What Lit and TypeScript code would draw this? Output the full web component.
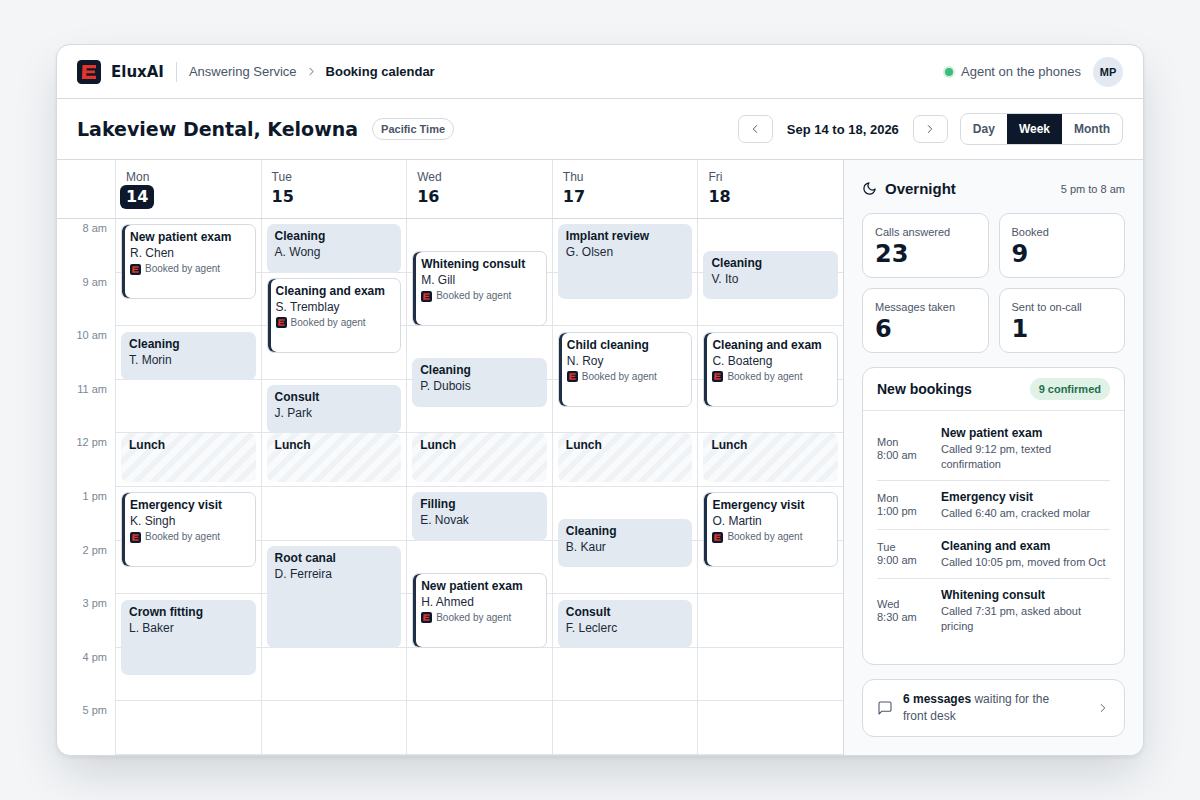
import { LitElement, html, css, svg, nothing } from "lit";
import { customElement, property } from "lit/decorators.js";
import { classMap } from "lit/directives/class-map.js";
import { styleMap } from "lit/directives/style-map.js";

type Kind = "agent" | "staff" | "lunch";

interface Visit {
  title: string;
  who?: string;
  start: number;
  hours: number;
  kind: Kind;
}

interface Day {
  name: string;
  date: number;
  today?: boolean;
  visits: Visit[];
}

const OPENING = 8;
const HOURS = [8, 9, 10, 11, 12, 13, 14, 15, 16, 17];

const visit = (title: string, who: string, start: number, hours: number, kind: Kind = "staff"): Visit => ({
  title,
  who,
  start,
  hours,
  kind,
});
const lunch: Visit = { title: "Lunch", start: 12, hours: 1, kind: "lunch" };

const DAYS: Day[] = [
  {
    name: "Mon",
    date: 14,
    today: true,
    visits: [
      visit("New patient exam", "R. Chen", 8, 1.5, "agent"),
      visit("Cleaning", "T. Morin", 10, 1),
      lunch,
      visit("Emergency visit", "K. Singh", 13, 1.5, "agent"),
      visit("Crown fitting", "L. Baker", 15, 1.5),
    ],
  },
  {
    name: "Tue",
    date: 15,
    visits: [
      visit("Cleaning", "A. Wong", 8, 1),
      visit("Cleaning and exam", "S. Tremblay", 9, 1.5, "agent"),
      visit("Consult", "J. Park", 11, 1),
      lunch,
      visit("Root canal", "D. Ferreira", 14, 2),
    ],
  },
  {
    name: "Wed",
    date: 16,
    visits: [
      visit("Whitening consult", "M. Gill", 8.5, 1.5, "agent"),
      visit("Cleaning", "P. Dubois", 10.5, 1),
      lunch,
      visit("Filling", "E. Novak", 13, 1),
      visit("New patient exam", "H. Ahmed", 14.5, 1.5, "agent"),
    ],
  },
  {
    name: "Thu",
    date: 17,
    visits: [
      visit("Implant review", "G. Olsen", 8, 1.5),
      visit("Child cleaning", "N. Roy", 10, 1.5, "agent"),
      lunch,
      visit("Cleaning", "B. Kaur", 13.5, 1),
      visit("Consult", "F. Leclerc", 15, 1),
    ],
  },
  {
    name: "Fri",
    date: 18,
    visits: [
      visit("Cleaning", "V. Ito", 8.5, 1),
      visit("Cleaning and exam", "C. Boateng", 10, 1.5, "agent"),
      lunch,
      visit("Emergency visit", "O. Martin", 13, 1.5, "agent"),
    ],
  },
];

const STATS = [
  ["Calls answered", 23],
  ["Booked", 9],
  ["Messages taken", 6],
  ["Sent to on-call", 1],
] as const;

const BOOKINGS = [
  { day: "Mon", time: "8:00 am", title: "New patient exam", note: "Called 9:12 pm, texted confirmation" },
  { day: "Mon", time: "1:00 pm", title: "Emergency visit", note: "Called 6:40 am, cracked molar" },
  { day: "Tue", time: "9:00 am", title: "Cleaning and exam", note: "Called 10:05 pm, moved from Oct" },
  { day: "Wed", time: "8:30 am", title: "Whitening consult", note: "Called 7:31 pm, asked about pricing" },
];

const hourLabel = (h: number) => (h < 12 ? `${h} am` : `${h === 12 ? 12 : h - 12} pm`);

const mark = (size: number) => html`<svg width=${size} height=${size} viewBox="0 0 24 24" aria-hidden="true">
  <rect width="24" height="24" rx="4.5" fill="#0d192b"></rect>
  <path d="M5.6 5H19V8.2H9.6V10.6H18V13.2H9.4V15.8H19V19H4.9L5.2 12.6Z" fill="#e5342b"></path>
</svg>`;

const stroke = (size: number, body: unknown, width = 1.6) => html`<svg
  width=${size}
  height=${size}
  viewBox="0 0 24 24"
  fill="none"
  stroke="currentColor"
  stroke-width=${width}
  stroke-linecap="round"
  stroke-linejoin="round"
  aria-hidden="true"
>
  ${body}
</svg>`;

const chevronRight = svg`<path d="m9 18 6-6-6-6"></path>`;
const chevronLeft = svg`<path d="m15 18-6-6 6-6"></path>`;
const moon = svg`<path d="M21 12.8A9 9 0 1 1 11.2 3 7 7 0 0 0 21 12.8z"></path>`;
const bubble = svg`<path d="M21 15a2 2 0 0 1-2 2H7l-4 4V5a2 2 0 0 1 2-2h14a2 2 0 0 1 2 2z"></path>`;

const base = css`
  * {
    box-sizing: border-box;
    margin: 0;
    padding: 0;
  }
  svg {
    display: block;
    flex: none;
  }
  button {
    font: inherit;
    color: inherit;
    background: none;
    border: 0;
    cursor: pointer;
  }
`;

@customElement("week-calendar")
export class WeekCalendar extends LitElement {
  @property({ attribute: false }) days: Day[] = [];

  static styles = [
    base,
    css`
      :host {
        display: grid;
        grid-template-columns: 58px minmax(0, 1fr);
        grid-template-rows: 59px minmax(0, 1fr);
        min-height: 595px;
      }
      .corner,
      .heads {
        border-bottom: 1px solid #d5dbe0;
      }
      .heads,
      .columns {
        display: grid;
        grid-template-columns: repeat(5, minmax(0, 1fr));
      }
      .head {
        display: flex;
        flex-direction: column;
        align-items: flex-start;
        border-left: 1px solid #e1e5e9;
        padding: 9px 0 0 4px;
      }
      .name {
        font-size: 12px;
        line-height: 16px;
        padding-left: 6px;
        color: #4a5568;
      }
      .date {
        font: 700 16px/24px "DejaVu Sans", sans-serif;
        padding: 0 6px;
        border-radius: 6px;
        color: #0d192b;
      }
      .date.today {
        background: #0d192b;
        color: #fff;
      }
      .hours {
        display: grid;
        grid-template-rows: repeat(10, minmax(0, 1fr));
        padding-right: 8px;
        text-align: right;
        font-size: 11px;
        line-height: 13px;
        color: #7b8794;
      }
      .hour {
        padding-top: 3px;
      }
      .column {
        display: grid;
        grid-template-rows: repeat(100, minmax(0, 1fr));
        grid-template-columns: minmax(0, 1fr);
        border-left: 1px solid #e1e5e9;
        padding: 0 5px;
      }
      .line {
        grid-column: 1;
        border-bottom: 1px solid #e1e5e9;
        margin: 0 -5px;
      }
      .visit {
        grid-column: 1;
        min-height: 0;
        padding: 4px 8px;
        border-radius: 7px;
        background: #e2e9f0;
        color: #1c293b;
        font-size: 12px;
        line-height: 16px;
      }
      .visit.agent {
        background: #fff;
        border: 1px solid #d5dbe0;
        box-shadow: inset 3px 0 0 #1e2f47;
      }
      .visit.lunch {
        background: repeating-linear-gradient(135deg, #f8fafb 0 6px, #f0f3f5 6px 12px);
      }
      .title {
        font-size: 12px;
        font-weight: 700;
        color: #0d192b;
        white-space: nowrap;
      }
      .tag {
        display: flex;
        align-items: center;
        gap: 4px;
        font-size: 10px;
        color: #5a6675;
        white-space: nowrap;
      }
    `,
  ];

  private visit(v: Visit) {
    const tenths = Math.round((v.start - OPENING) * 10);
    const first = tenths + (v.kind === "lunch" ? 1 : 2);
    const span = Math.round(v.hours * 10) - 1;
    return html`<article
      class=${classMap({ visit: true, agent: v.kind === "agent", lunch: v.kind === "lunch" })}
      style=${styleMap({ gridRow: `${first} / span ${span}` })}
    >
      <h3 class="title">${v.title}</h3>
      ${v.who ? html`<p>${v.who}</p>` : nothing}
      ${v.kind === "agent" ? html`<p class="tag">${mark(11)}<span>Booked by agent</span></p>` : nothing}
    </article>`;
  }

  render() {
    return html`
      <div class="corner"></div>
      <div class="heads">
        ${this.days.map(
          (d) => html`<div class="head">
            <span class="name">${d.name}</span>
            <span class=${classMap({ date: true, today: !!d.today })}>${d.date}</span>
          </div>`
        )}
      </div>
      <div class="hours">${HOURS.map((h) => html`<span class="hour">${hourLabel(h)}</span>`)}</div>
      <div class="columns">
        ${this.days.map(
          (d) => html`<section class="column" aria-label=${`${d.name} ${d.date}`}>
            ${HOURS.map(
              (_, i) => html`<div class="line" style=${styleMap({ gridRow: `${i * 10 + 1} / span 10` })}></div>`
            )}
            ${d.visits.map((v) => this.visit(v))}
          </section>`
        )}
      </div>
    `;
  }
}

@customElement("overnight-panel")
export class OvernightPanel extends LitElement {
  static styles = [
    base,
    css`
      :host {
        display: grid;
        border-left: 1px solid #d5dbe0;
        background: #f8fafb;
      }
      .panel {
        display: flex;
        flex-direction: column;
        gap: 14px;
        padding: 18px;
      }
      .top {
        display: flex;
        align-items: center;
        gap: 8px;
        height: 21px;
      }
      .heading {
        flex: 1;
        font-size: 15px;
        font-weight: 700;
      }
      .span {
        font-size: 11px;
        color: #4a5568;
      }
      .stats {
        display: grid;
        grid-template-columns: 1fr 1fr;
        gap: 10px;
      }
      .card {
        background: #fff;
        border: 1px solid #d5dbe0;
        border-radius: 10px;
      }
      .stat {
        padding: 10px 12px 8px;
      }
      .label {
        font-size: 11px;
        line-height: 16px;
        color: #4a5568;
      }
      .value {
        font: 700 24px/29px "DejaVu Sans", sans-serif;
      }
      .bookings {
        flex: 1;
        border-radius: 12px;
      }
      .bookings-head {
        display: flex;
        align-items: center;
        justify-content: space-between;
        padding: 10px 14px;
        border-bottom: 1px solid #e1e5e9;
      }
      .subheading {
        font-size: 14px;
        font-weight: 700;
      }
      .badge {
        padding: 0 9px;
        border-radius: 11px;
        background: #e0f1e7;
        color: #24704a;
        font-size: 11px;
        font-weight: 700;
        line-height: 22px;
      }
      .list {
        list-style: none;
        padding: 6px 14px;
      }
      .item {
        display: grid;
        grid-template-columns: 54px minmax(0, 1fr);
        gap: 10px;
        align-items: center;
        padding: 8px 0;
      }
      .item + .item {
        border-top: 1px solid #e1e5e9;
      }
      .when {
        font-size: 11px;
        line-height: 13px;
        color: #4a5568;
      }
      .day {
        display: block;
      }
      .what {
        font-size: 12px;
        font-weight: 700;
        line-height: 17px;
      }
      .note {
        font-size: 11px;
        line-height: 15px;
        color: #4a5568;
      }
      .messages {
        display: flex;
        align-items: center;
        gap: 10px;
        padding: 11px 14px;
        border-radius: 12px;
        text-align: left;
        font-size: 12px;
        line-height: 17px;
        color: #4a5568;
      }
      .text {
        flex: 1;
        padding-right: 24px;
      }
      .strong {
        color: #0d192b;
      }
    `,
  ];

  render() {
    return html`<aside class="panel">
      <div class="top">
        ${stroke(15, moon, 2)}
        <h2 class="heading">Overnight</h2>
        <span class="span">5 pm to 8 am</span>
      </div>
      <div class="stats">
        ${STATS.map(
          ([label, value]) => html`<div class="card stat">
            <p class="label">${label}</p>
            <p class="value">${value}</p>
          </div>`
        )}
      </div>
      <section class="card bookings">
        <header class="bookings-head">
          <h3 class="subheading">New bookings</h3>
          <span class="badge">9 confirmed</span>
        </header>
        <ul class="list">
          ${BOOKINGS.map(
            (b) => html`<li class="item">
              <span class="when"><span class="day">${b.day}</span>${b.time}</span>
              <div>
                <p class="what">${b.title}</p>
                <p class="note">${b.note}</p>
              </div>
            </li>`
          )}
        </ul>
      </section>
      <button class="card messages">
        ${stroke(16, bubble)}
        <span class="text"><strong class="strong">6 messages</strong> waiting for the front desk</span>
        ${stroke(14, chevronRight)}
      </button>
    </aside>`;
  }
}

@customElement("app-root")
export class AppRoot extends LitElement {
  static styles = [
    base,
    css`
      :host {
        display: flex;
        box-sizing: border-box;
        min-height: 100vh;
        padding: 44px 56px;
        background: #f3f5f7;
        color: #0d192b;
        font-family: "Liberation Sans", Arial, sans-serif;
      }
      .window {
        flex: 1;
        min-width: 0;
        display: flex;
        flex-direction: column;
        overflow: hidden;
        background: #fff;
        border: 1px solid #d5dbe0;
        border-radius: 14px;
        box-shadow: 0 2px 4px rgba(13, 25, 43, 0.06), 0 20px 48px -6px rgba(13, 25, 43, 0.16);
      }
      .bar {
        display: flex;
        align-items: center;
        padding: 0 20px;
        border-bottom: 1px solid #d5dbe0;
      }
      .topbar {
        height: 54px;
      }
      .brand {
        display: flex;
        align-items: center;
        gap: 10px;
        padding-right: 12px;
        font: 700 15px/20px "DejaVu Sans", sans-serif;
      }
      .crumbs {
        display: flex;
        align-items: center;
        gap: 8px;
        padding-left: 12px;
        border-left: 1px solid #d5dbe0;
        font-size: 13px;
        line-height: 20px;
        color: #4a5568;
      }
      .crumb {
        color: inherit;
        text-decoration: none;
      }
      .here {
        font-weight: 700;
        color: #0d192b;
      }
      .end {
        display: flex;
        align-items: center;
        gap: 12px;
        margin-left: auto;
      }
      .status {
        display: flex;
        align-items: center;
        gap: 8px;
        font-size: 13px;
        color: #4a5568;
      }
      .dot {
        width: 8px;
        height: 8px;
        border-radius: 50%;
        background: #3dba7e;
        box-shadow: 0 0 0 2px #d0f0df;
      }
      .avatar {
        width: 30px;
        height: 30px;
        border-radius: 50%;
        background: #e2e9f0;
        font-size: 11px;
        font-weight: 700;
        line-height: 30px;
        text-align: center;
      }
      .toolbar {
        height: 61px;
        gap: 14px;
      }
      .place {
        font: 700 19px/28px "DejaVu Sans", sans-serif;
      }
      .zone {
        padding: 0 8px;
        border: 1px solid #d5dbe0;
        border-radius: 11px;
        font-size: 11px;
        font-weight: 700;
        line-height: 20px;
        color: #4a5568;
      }
      .step {
        display: flex;
        align-items: center;
        justify-content: center;
        width: 35px;
        height: 28px;
        border: 1px solid #d5dbe0;
        border-radius: 7px;
        color: #4a5568;
      }
      .range {
        padding: 0 2px;
        font-size: 13px;
        font-weight: 700;
      }
      .views {
        display: flex;
        overflow: hidden;
        border: 1px solid #d5dbe0;
        border-radius: 8px;
      }
      .view {
        padding: 0 12px;
        font-size: 12px;
        font-weight: 700;
        line-height: 30px;
        color: #4a5568;
      }
      .view.on {
        background: #0d192b;
        color: #fff;
      }
      .main {
        flex: 1;
        display: grid;
        grid-template-columns: minmax(0, 1fr) 300px;
      }
    `,
  ];

  render() {
    return html`
      <div class="window">
        <header class="bar topbar">
          <div class="brand">${mark(24)}<span>EluxAI</span></div>
          <nav class="crumbs" aria-label="Breadcrumb">
            <a class="crumb" href="#">Answering Service</a>
            ${stroke(13, chevronRight)}
            <span class="here">Booking calendar</span>
          </nav>
          <div class="end">
            <span class="status"><span class="dot"></span>Agent on the phones</span>
            <span class="avatar">MP</span>
          </div>
        </header>
        <div class="bar toolbar">
          <h1 class="place">Lakeview Dental, Kelowna</h1>
          <span class="zone">Pacific Time</span>
          <div class="end">
            <button class="step" aria-label="Previous week">${stroke(14, chevronLeft)}</button>
            <span class="range">Sep 14 to 18, 2026</span>
            <button class="step" aria-label="Next week">${stroke(14, chevronRight)}</button>
            <div class="views" role="group" aria-label="Calendar view">
              <button class="view">Day</button>
              <button class="view on" aria-pressed="true">Week</button>
              <button class="view">Month</button>
            </div>
          </div>
        </div>
        <main class="main">
          <week-calendar .days=${DAYS}></week-calendar>
          <overnight-panel></overnight-panel>
        </main>
      </div>
    `;
  }
}
